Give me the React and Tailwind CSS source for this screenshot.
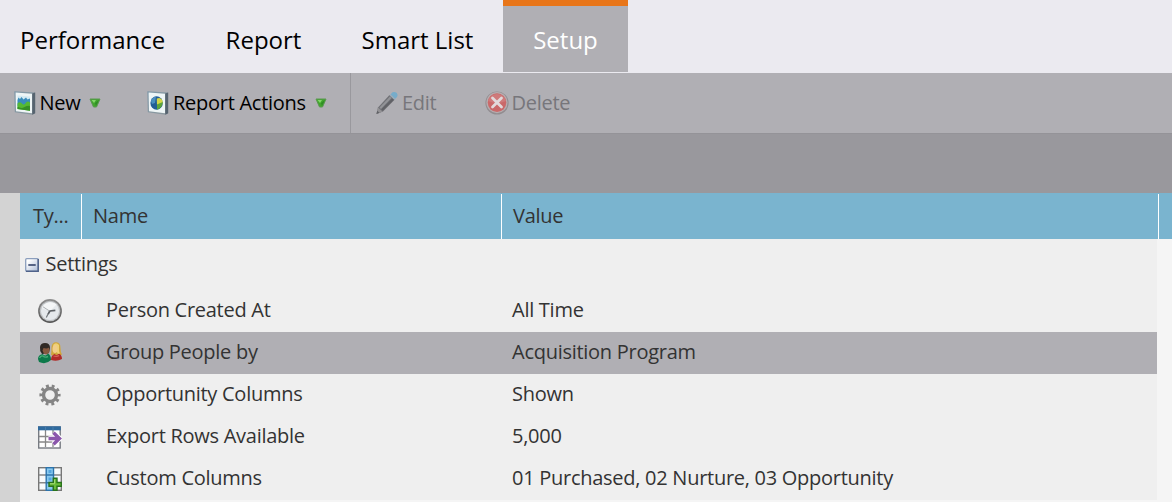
import React from 'react';

function PictureFrame({ children, id }) {
  return (
    <svg width="22" height="24" viewBox="0 0 22 24" className="shrink-0">
      <defs>
        <linearGradient id={id} x1="0" y1="0" x2="1" y2="1">
          <stop offset="0" stopColor="#7f98a8" />
          <stop offset="1" stopColor="#8c979c" />
        </linearGradient>
      </defs>
      <path d="M0.300 0.200 L21 1.500 V22.300 L18.500 23.800 L0.800 21.300Z" fill={`url(#${id})`} />
      <path d="M18.300 2.600 L21.200 1.600 V22.300 L18.300 23.700Z" fill="#56636f" />
      <path d="M1.600 1.600 L18 2.800 V22.300 L2 20.200Z" fill="#eef5f6" />
      {children}
    </svg>
  );
}

function LandscapeIcon() {
  return (
    <PictureFrame id="frame-new">
      <path d="M3.500 4.500 L16 5.500 V19.500 L3.500 18Z" fill="#d3eaf3" />
      <path d="M3.500 9 L4.500 6.500 L6 8 L7.500 6 L9.500 8.500 L12 6.500 L13.500 8.500 L16 7.500 V15 H3.500Z" fill="#3a8cba" />
      <path d="M3.500 12.500 Q6 10 8.500 13 Q10.500 14.500 12 11.500 Q14 9.500 16 11.500 V19.800 L3.500 18Z" fill="#55b933" />
      <path d="M3.500 15.500 Q7 18 10.500 16 T16 15 V19.800 L3.500 18Z" fill="#368f25" />
    </PictureFrame>
  );
}

function PieIcon() {
  return (
    <PictureFrame id="frame-report">
      <ellipse cx="9.600" cy="12" rx="6.200" ry="6.700" fill="#235d96" />
      <path d="M4 10 A6.200 6.500 0 0 1 9 5.500 L8 12 L5 13Z" fill="#4b8fbe" />
      <path d="M9.800 7.500 Q14 5.500 15.700 10 L15.500 12.500 L10 14Z" fill="#d4d648" />
      <path d="M10 13.500 L15.700 11 Q15.500 17 10 18.700Z" fill="#5da53a" />
    </PictureFrame>
  );
}

function Caret() {
  return (
    <svg width="12" height="10" viewBox="0 0 12 10" className="shrink-0">
      <path d="M1 1 H11 L7.500 9 H4.500Z" fill="#41a52c" stroke="#5a9850" strokeLinejoin="round" />
      <path d="M2.500 2 H7 L5 5Z" fill="#82d769" />
      <path d="M10 2 L7 8 L6 5Z" fill="#2f8d25" />
    </svg>
  );
}

function PencilIcon() {
  return (
    <svg width="24" height="24" viewBox="0 0 24 24" className="shrink-0">
      <path d="M0.500 23 L2 16.500 L13.500 4 L18.800 8.500 L7 20.500Z" fill="#707176" />
      <path d="M3.500 16.500 L14 5.500 L15.500 7 L5 18Z" fill="#929397" />
      <path d="M6 19 L17.200 8" stroke="#606166" strokeWidth="2" />
      <path d="M0.500 23 L2 16.500 L6.500 20.500Z" fill="#939295" />
      <path d="M0.500 23 L1.200 19.800 L3.500 21.700Z" fill="#606166" />
      <path d="M14.500 3.500 L16.500 1.300 Q18.800 0.200 20.800 2 Q22.300 4 21 6 L19 8Z" fill="#76acca" />
      <path d="M14 4 L19 8.500" stroke="#99aab8" strokeWidth="1.500" />
    </svg>
  );
}

function DeleteIcon() {
  return (
    <svg width="24" height="24" viewBox="0 0 24 24" className="shrink-0">
      <circle cx="12" cy="12" r="11.600" fill="#928d90" />
      <circle cx="12" cy="11.600" r="10.600" fill="#b6acaf" />
      <circle cx="12" cy="11.600" r="9.300" fill="#ca6869" />
      <path d="M3 10 A9.300 9.300 0 0 1 21 10 Q12 14 3 10Z" fill="#cf7a7b" />
      <path d="M7.500 7 L16.500 16 M16.500 7 L7.500 16" stroke="#e2d9db" strokeWidth="2.800" strokeLinecap="round" />
    </svg>
  );
}

function CollapseIcon() {
  return (
    <svg width="14" height="14" viewBox="0 0 14 14" className="shrink-0">
      <defs>
        <linearGradient id="collapse-face" x1="0" y1="0" x2="1" y2="1">
          <stop offset="0.200" stopColor="#fff" />
          <stop offset="1" stopColor="#a9b9d5" />
        </linearGradient>
      </defs>
      <rect x="0.700" y="0.700" width="12.600" height="12.600" rx="1" fill="url(#collapse-face)" stroke="#8b9ebd" strokeWidth="1.300" />
      <path d="M13.200 1 V13.200 H1" fill="none" stroke="#4f628a" strokeWidth="1.500" />
      <path d="M3.300 7 H10.700" stroke="#34446b" strokeWidth="1.600" />
    </svg>
  );
}

function ClockIcon() {
  return (
    <svg width="24" height="24" viewBox="0 0 26 26">
      <defs>
        <linearGradient id="clock-rim" x1="0" y1="0" x2="0" y2="1">
          <stop offset="0" stopColor="#8e8e8e" />
          <stop offset="1" stopColor="#555" />
        </linearGradient>
      </defs>
      <circle cx="13" cy="13" r="12.900" fill="url(#clock-rim)" />
      <circle cx="13" cy="13" r="11.200" fill="#bfc2c4" />
      <circle cx="13" cy="13" r="9.800" fill="#e5e9ec" />
      <path d="M4.500 10 A9.600 9.600 0 0 1 20 6 L13 13Z" fill="#f4f6f7" />
      <path d="M5.500 8.500 L12.500 13" fill="none" stroke="#a5a9ad" strokeWidth="1" />
      <path d="M12.500 13 L9 20" fill="none" stroke="#72777b" strokeWidth="1.300" />
      <path d="M18.800 12.300 L13 13 L11 16.500" fill="none" stroke="#5d6165" strokeWidth="1.700" />
    </svg>
  );
}

function PeopleIcon() {
  return (
    <svg width="24" height="22" viewBox="0 0 24 22">
      <path d="M13 13 Q13.500 9 13.500 5 Q14 0 18.500 0.300 Q22.500 0.500 22.500 6 Q22.500 10 24 12.500 L19 15Z" fill="#d0a63c" />
      <path d="M15 3 Q18 -0.500 21 3 L21 9 L22 12 H20Z" fill="#eed173" />
      <ellipse cx="17" cy="7" rx="2.500" ry="4" fill="#f0cd8a" />
      <path d="M13 18 Q13 13.500 16.500 12 Q19 14 21 11.500 Q24 13 24 17 Q19 20 13 18Z" fill="#b02b29" />
      <path d="M15.500 14 Q19 15 21 13.500" fill="none" stroke="#d5645a" strokeWidth="1.200" />
      <path d="M2 5 Q2.500 1 7 1 Q12 1 12 6 L11 11 L4 12 Q1.500 9 2 5Z" fill="#302925" />
      <path d="M5.500 6 Q9 7 11 5.500 L11.500 8.500 Q11 12.500 8 12.500 Q5.500 12 4.500 8.500Z" fill="#875940" />
      <path d="M0 17 Q0 13 4.500 12 Q7.500 15 10 11.500 Q13 13 13 18 Q8 23 1 20Z" fill="#0d794a" />
      <path d="M1.500 16 Q3 13.500 5 14 Q7 16 10 14.500" fill="none" stroke="#48ac74" strokeWidth="1.400" />
    </svg>
  );
}

function GearIcon() {
  return (
    <svg width="22" height="22" viewBox="0 0 22 22">
      <circle cx="11" cy="11" r="9" fill="none" stroke="#858585" strokeWidth="3.200" strokeDasharray="2.827 2.828" strokeDashoffset="1.413" />
      <circle cx="11" cy="11" r="6.500" fill="none" stroke="#858585" strokeWidth="3.400" />
    </svg>
  );
}

function ExportIcon() {
  return (
    <svg width="24" height="23" viewBox="0 0 24 23">
      <rect x="0.700" y="1" width="21.500" height="21" fill="#fff" stroke="#777b82" strokeWidth="1.400" />
      <path d="M7.500 4 V21 M15 4 V21 M1 10.500 H22 M1 16 H22" stroke="#888" strokeWidth="1.300" />
      <rect x="0" y="0.300" width="22.800" height="4" fill="#2f6a9e" />
      <path d="M7.500 1 V4 M15 1 V4" stroke="#487caa" />
      <path d="M10.500 12.500 H21 M15.500 6.800 L21.500 12.500 L15.500 18.200" fill="none" stroke="#fff" strokeWidth="5.500" />
      <path d="M10.500 12.500 H21 M15.500 6.800 L21.500 12.500 L15.500 18.200" fill="none" stroke="#8b57ac" strokeWidth="3.400" />
    </svg>
  );
}

function ColumnsIcon() {
  return (
    <svg width="24" height="24" viewBox="0 0 24 24">
      <rect x="0.700" y="0.700" width="22.600" height="22.600" fill="#f7fafc" stroke="#777" strokeWidth="1.400" />
      <path d="M1 8 H23 M1 15.700 H23" stroke="#888" strokeWidth="1.400" />
      <rect x="8.200" y="0.700" width="7.300" height="22.600" fill="#8acaf0" stroke="#2c73ab" strokeWidth="1.400" />
      <path d="M8 8 H15.500 M8 15.700 H15.500" stroke="#2c73ab" strokeWidth="1.400" />
      <rect x="10.500" y="3" width="3" height="3" fill="#55a6df" />
      <rect x="10.500" y="10.500" width="3" height="3" fill="#55a6df" />
      <path d="M15.300 11.300 H19 V15.500 H23.300 V19.200 H19 V23.300 H15.300 V19.200 H11 V15.500 H15.300Z" fill="#69bd39" stroke="#28731a" strokeWidth="1.400" />
      <path d="M16.500 12.500 V16.700 H12" fill="none" stroke="#a0da72" strokeWidth="1" />
    </svg>
  );
}

const rows = [
  { icon: ClockIcon, name: 'Person Created At', value: 'All Time' },
  { icon: PeopleIcon, name: 'Group People by', value: 'Acquisition Program', selected: true },
  { icon: GearIcon, name: 'Opportunity Columns', value: 'Shown' },
  { icon: ExportIcon, name: 'Export Rows Available', value: '5,000' },
  { icon: ColumnsIcon, name: 'Custom Columns', value: '01 Purchased, 02 Nurture, 03 Opportunity' },
];

export default function App() {
  return (
    <div className="flex h-[502px] w-[1172px] flex-col overflow-hidden bg-[#efefef] font-['Open_Sans',sans-serif] text-[20px] leading-[28px] tracking-[-0.27px] text-[#333]">
      <nav className="flex h-[73px] shrink-0 bg-[#ebeaf0] pb-px text-[24px] leading-8 tracking-normal text-black">
        <div className="w-[205px] pl-5 pt-6">Performance</div>
        <div className="w-[136px] pl-[20.6px] pt-6">Report</div>
        <div className="w-[162px] pl-[20.5px] pt-6">Smart List</div>
        <div className="w-[125px] border-t-6 border-[#e87518] bg-[#b0afb4] pt-[18px] text-center text-white">Setup</div>
      </nav>
      <div className="flex h-[60px] shrink-0 bg-[#b0afb4] text-black">
        <div className="flex w-[351px] items-center border-r border-[#99989d] pl-[14px]">
          <LandscapeIcon />
          <span className="ml-[3.500px] w-[49.500px]">New</span>
          <Caret />
          <span className="ml-[46px] flex"><PieIcon /></span>
          <span className="ml-[4px] w-[142px]">Report Actions</span>
          <Caret />
        </div>
        <div className="flex items-center pl-[25px] text-[#77767b]">
          <PencilIcon />
          <span className="ml-[2px] w-[82.500px]">Edit</span>
          <DeleteIcon />
          <span className="ml-[3px]">Delete</span>
        </div>
      </div>
      <div className="h-[60px] shrink-0 border-t border-[#949398] bg-[#99989d]" />
      <div className="flex min-h-0 grow">
        <div className="w-5 shrink-0 bg-[#d3d3d3]" />
        <div className="flex min-w-0 grow flex-col">
          <div className="flex h-[46px] shrink-0 bg-[#7ab4cf] pt-px">
            <div className="w-[62px] border-r border-white pl-[13px] pt-2">Ty...</div>
            <div className="w-[420px] border-r border-white pl-[11px] pt-2">Name</div>
            <div className="w-[657px] border-r border-white pl-[11px] pt-2">Value</div>
          </div>
          <div className="flex min-h-0 grow items-start bg-[#f5f5f5]">
            <div className="w-[1137px] bg-[#efefef]">
              <div className="flex h-[51px] items-center pl-[5px]">
                <CollapseIcon />
                <span className="ml-[6.500px] pb-[2px]">Settings</span>
              </div>
              {rows.map(({ icon: Icon, name, value, selected }) => (
                <div key={name} className={`flex h-[42px] items-center ${selected ? 'bg-[#b0afb4]' : ''}`}>
                  <div className="flex w-[60px] justify-center"><Icon /></div>
                  <div className="w-[432px] pb-[2px] pl-[26px]">{name}</div>
                  <div className="pb-[2px]">{value}</div>
                </div>
              ))}
            </div>
          </div>
        </div>
      </div>
    </div>
  );
}
